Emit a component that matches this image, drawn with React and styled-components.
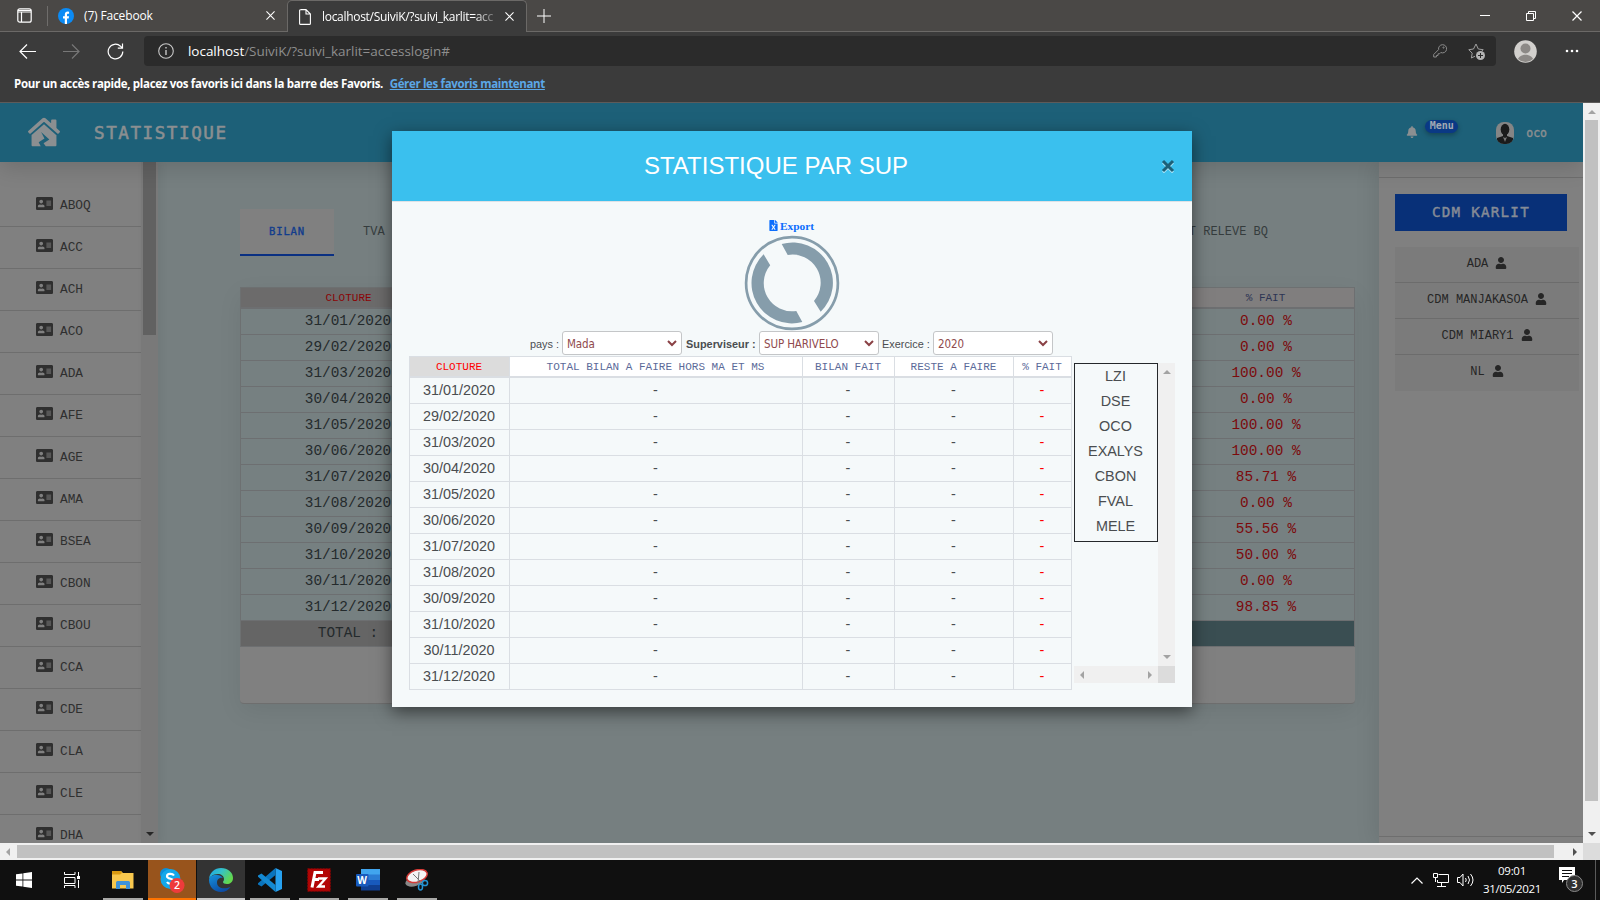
import React from "react";
import styled, { createGlobalStyle, css } from "styled-components";
import { FaHouseDamage, FaAddressCard, FaUser, FaBell, FaFileExcel } from "react-icons/fa";

const ui = `"Open Sans", "Noto Sans", sans-serif`;
const arial = `"Liberation Sans", Arial, sans-serif`;
const mono = `"Liberation Mono", monospace`;
const monoWide = `"DejaVu Sans Mono", monospace`;

const Global = createGlobalStyle`
  *, *::before, *::after { box-sizing: border-box; }
  body { margin: 0; background: #101010; overflow: hidden; }
  svg { display: block; flex: none; }
`;

const Desktop = styled.div`
  width: 1600px;
  height: 900px;
  display: flex;
  flex-direction: column;
  overflow: hidden;
  white-space: nowrap;
`;

/* ---------- browser chrome ---------- */
const TabStrip = styled.div`
  height: 32px;
  flex: none;
  display: flex;
  background: #4a4846;
  color: #fff;
  font: 12px ${ui};
`;
const StripPart = styled.div`
  display: flex;
  align-items: center;
  height: 32px;
  width: ${(p) => p.$w}px;
  flex: ${(p) => (p.$grow ? 1 : "none")};
  padding-left: ${(p) => p.$pl || 0}px;
  border-bottom: 1px solid #6b6967;
`;
const Divider = styled.i`
  width: 1px;
  height: 20px;
  margin: 0 10px 0 15px;
  background: #6f6d6b;
`;
const TabTitle = styled.span`
  width: ${(p) => p.$w}px;
  padding-left: ${(p) => (p.$fade ? 11 : 10)}px;
  letter-spacing: ${(p) => p.$ls}px;
  ${(p) => p.$fade && css`
    mask-image: linear-gradient(90deg, #000 84%, transparent 98%);
  `}
`;
const ActiveTab = styled.div`
  width: 240px;
  height: 32px;
  display: flex;
  align-items: center;
  padding-left: 11px;
  background: #3b3b3b;
  border: 1px solid #6b6967;
  border-bottom: 0;
  border-radius: 5px 5px 0 0;
`;
const WindowButtons = styled.div`
  display: flex;
  margin-left: auto;
  gap: 36px;
  padding-right: 18px;
`;
const Toolbar = styled.div`
  height: 37px;
  flex: none;
  display: flex;
  align-items: center;
  background: #3b3b3b;
  padding: 1px 0 0 19px;
`;
const ToolIcon = styled.span`
  margin-right: ${(p) => p.$mr}px;
`;
const AddressBar = styled.div`
  width: 1352px;
  height: 30px;
  display: flex;
  align-items: center;
  padding: 0 11px 0 14px;
  background: #2b2b2b;
  border-radius: 4px;
  font: 13.5px ${ui};
  color: #8e8e8e;
`;
const Url = styled.span`
  margin-left: 14px;
  flex: 1;
  letter-spacing: -0.04px;
  b { font-weight: 400; color: #fff; }
`;
const Profile = styled.span`
  margin: 0 28px 0 18px;
`;
const FavBar = styled.div`
  height: 34px;
  flex: none;
  padding: 6px 0 0 14px;
  background: #3b3b3b;
  border-bottom: 1px solid #5d5b5a;
  color: #fff;
  font: 700 11.5px/18px ${ui};
  letter-spacing: -0.315px;
  a { margin-left: 4px; color: #5ba7e6; text-decoration: underline; letter-spacing: -0.35px; }
`;

/* ---------- page ---------- */
const Viewport = styled.div`
  height: 757px;
  flex: none;
  display: grid;
  grid-template: 740px 17px / 1583px 17px;
  background: #f0f0f0;
`;
const Page = styled.div`
  position: relative;
  display: flex;
  flex-direction: column;
  overflow: hidden;
  background: #767f80;
  font-family: ${mono};
`;
const Header = styled.header`
  position: relative;
  z-index: 1;
  height: 59px;
  flex: none;
  display: flex;
  align-items: center;
  padding: 0 36px 0 27px;
  background: #1d6078;
  color: #8b8f91;
  box-shadow: 0 6px 22px rgba(0, 0, 0, 0.14);
`;
const HomeLink = styled.span`
  margin-bottom: 2px;
  padding-left: 1px;
`;
const PageTitle = styled.h1`
  margin: 0 auto 0 34px;
  font: 400 17.6px ${monoWide};
  letter-spacing: 1.55px;
  -webkit-text-stroke: 0.55px #8b8f91;
`;
const MenuBadge = styled.span`
  width: 33px;
  height: 13px;
  margin: -12px 38px 0 7px;
  border-radius: 7px;
  background: #0a3985;
  box-shadow: 0 2px 5px rgba(0, 0, 0, 0.3);
  color: #a3a9b4;
  text-align: center;
  font: 700 10px/12px ${monoWide};
`;
const BellSlot = styled.span`
  margin-bottom: 1px;
`;
const UserName = styled.span`
  margin-left: 12px;
  font: 400 11.5px ${monoWide};
  -webkit-text-stroke: 0.4px #8b8f91;
`;
const Columns = styled.div`
  flex: 1;
  min-height: 0;
  display: flex;
`;
const Sidebar = styled.nav`
  width: 141px;
  padding-top: 23px;
  background: #808080;
`;
const SideItem = styled.div`
  height: 42px;
  display: flex;
  align-items: center;
  gap: 7px;
  padding: 0 0 4px 36px;
  border-bottom: 1px solid #6e6e6e;
  color: #2f2f2f;
  font-size: 12.8px;
  span { padding-top: 3px; }
`;
const SideScroll = styled.div`
  width: 17px;
  display: flex;
  flex-direction: column;
  align-items: center;
  justify-content: space-between;
  padding-bottom: 7px;
  background: #797979;
  box-shadow: 3px 0 8px rgba(0, 0, 0, 0.06);
`;
const SideThumb = styled.div`
  width: 13px;
  height: 173px;
  background: #616161;
`;
const Main = styled.main`
  flex: 1;
  padding: 47px 24px 0 82px;
`;
const Tabs = styled.div`
  height: 47px;
  display: flex;
  align-items: center;
  justify-content: space-between;
  padding-right: 87px;
  color: #353c3d;
  font-size: 12px;
`;
const TabGroup = styled.div`
  display: flex;
  align-items: center;
  gap: 29px;
`;
const TabLink = styled.span`
  margin-bottom: 2px;
`;
const CurrentTab = styled.span`
  width: 94px;
  height: 47px;
  background: #808080;
  border-bottom: 2px solid #0a3082;
  color: #123c8c;
  font: 400 10.6px/44px ${monoWide};
  letter-spacing: 0.82px;
  -webkit-text-stroke: 0.35px #123c8c;
  text-align: center;
`;
const Card = styled.section`
  width: 1115px;
  margin-top: 31px;
  padding-bottom: 56px;
  background: #808080;
  border-bottom: 1px solid #6e6e6e;
  border-radius: 0 0 4px 4px;
  box-shadow: 0 8px 24px rgba(0, 0, 0, 0.07);
`;
const BackTable = styled.div`
  display: grid;
  grid-template-columns: 216px 1fr 177px;
  border: 1px solid #6d7071;
  border-width: 1px 0 0 1px;
`;
const BackCell = styled.div`
  height: 26px;
  background: #768081;
  border: 1px solid #6d6f71;
  border-width: 0 1px 1px 0;
  color: ${(p) => (p.$red ? "#7c0a0c" : "#242a2c")};
  text-align: center;
  font-size: 14.4px;
  line-height: 24px;
  padding-right: ${(p) => (p.$red ? 0 : 1)}px;
  ${(p) => p.$total && css`
    background: ${p.$total};
  `}
`;
const BackHead = styled(BackCell)`
  height: 21px;
  border-bottom-width: 2px;
  background: ${(p) => (p.$red ? "#6c6b6b" : "#807e7e")};
  color: ${(p) => (p.$red ? "#8a0506" : "#2d3554")};
  font-size: 11px;
  line-height: 20px;
`;
const RightPanel = styled.aside`
  width: 204px;
  display: flex;
  flex-direction: column;
  background: #808080;
  box-shadow: -4px 0 20px rgba(0, 0, 0, 0.09);
`;
const PanelEdge = styled.div`
  height: ${(p) => p.$h}px;
  ${(p) => (p.$end ? "border-top" : "border-bottom")}: 1px solid #6e6e6e;
`;
const CdmButton = styled.div`
  width: 172px;
  height: 37px;
  margin: 16px 0 16px 16px;
  background: #083078;
  color: #858b96;
  text-align: center;
  font: 400 14.2px/36px ${monoWide};
  letter-spacing: 1.25px;
  -webkit-text-stroke: 0.45px #858b96;
`;
const CdmList = styled.div`
  width: 184px;
  margin: 0 0 auto 16px;
`;
const CdmItem = styled.div`
  height: 36px;
  display: flex;
  align-items: center;
  justify-content: center;
  gap: 7px;
  padding-bottom: 2px;
  background: #7b7b7b;
  border-bottom: 1px solid ${(p) => (p.$last ? "#7b7b7b" : "#6c6c6c")};
  color: #262626;
  font-size: 12px;
  svg { margin-bottom: 1px; }
`;

/* ---------- scrollbars ---------- */
const VScroll = styled.div`
  padding: 17px 0 0 2px;
  position: relative;
  background: #f0f0f0;
`;
const HScroll = styled.div`
  padding: 2px 0 0 17px;
  position: relative;
  background: #f0f0f0;
`;
const Thumb = styled.div`
  width: ${(p) => p.$w}px;
  height: ${(p) => p.$h}px;
  background: #c1c1c1;
`;
const Corner = styled.div`
  background: #dcdcdc;
`;
const Arrow = styled.i`
  position: absolute;
  width: 0;
  height: 0;
  border: 4px solid transparent;
  ${(p) => ({
    up: `top: 7px; left: 5px; border-top: 0; border-bottom-color: ${p.$c};`,
    down: `bottom: 7px; left: 5px; border-bottom: 0; border-top-color: ${p.$c};`,
    left: `left: 6px; top: 5px; border-left: 0; border-right-color: ${p.$c};`,
    right: `right: 6px; top: 5px; border-right: 0; border-left-color: ${p.$c};`,
    flow: `position: static; border-bottom: 0; border-top-color: ${p.$c};`,
  })[p.$dir]}
`;

/* ---------- modal ---------- */
const Modal = styled.div`
  position: absolute;
  z-index: 2;
  left: 392px;
  top: 28px;
  width: 800px;
  height: 576px;
  background: #f5f9fa;
  box-shadow: 0 5px 16px rgba(0, 0, 0, 0.5);
  color: #4a4d50;
  font-family: ${arial};
`;
const ModalHeader = styled.div`
  height: 71px;
  display: flex;
  align-items: center;
  background: #3ac0ee;
  border-bottom: 1px solid #dee2e6;
  color: #fff;
`;
const ModalTitle = styled.h2`
  flex: 1;
  margin: 0 -33px 0 0;
  padding-right: 34px;
  text-align: center;
  font: 400 24px ${arial};
`;
const Close = styled.span`
  margin-right: 17px;
`;
const ModalBody = styled.div`
  padding: 15px 17px 0;
`;
const Export = styled.div`
  height: 18px;
  display: flex;
  align-items: center;
  justify-content: center;
  gap: 1px;
  padding: 0 2px 1px 0;
  color: #0d6efd;
  font: 700 11.4px "Liberation Serif", serif;
`;
const Loader = styled.div`
  display: flex;
  justify-content: center;
  height: 96px;
`;
const Filters = styled.div`
  height: 24px;
  margin-bottom: 1px;
  display: flex;
  align-items: center;
  padding-left: 121px;
`;
const Label = styled.span`
  width: ${(p) => p.$w}px;
  margin-left: ${(p) => p.$ml || 0}px;
  padding-top: 2px;
  font-size: 10.9px;
  font-weight: ${(p) => (p.$bold ? 700 : 400)};
`;
const Select = styled.div`
  width: 120px;
  height: 24px;
  display: flex;
  align-items: center;
  justify-content: space-between;
  padding: 2px 4px 0 4px;
  background: #fff;
  border: 1px solid #c4c6c8;
  border-radius: 3px;
  color: #8f4a4d;
  font: 11.5px "DejaVu Sans Condensed", "DejaVu Sans", sans-serif;
  font-stretch: condensed;
  letter-spacing: -0.12px;
  svg { margin-bottom: 1px; }
`;
const Results = styled.div`
  display: flex;
`;
const Table = styled.div`
  width: 663px;
  display: grid;
  grid-template-columns: 100px 293px 92px 119px 58px;
  border: 1px solid #dadee3;
  border-width: 1px 0 0 1px;
`;
const Cell = styled.div`
  height: 26px;
  padding-right: 1px;
  border: 1px solid #dadee3;
  border-width: 0 1px 1px 0;
  text-align: center;
  font-size: 14.4px;
  line-height: 25px;
  color: ${(p) => (p.$red ? "#f00" : "#4a4d50")};
`;
const HeadCell = styled(Cell)`
  height: 21px;
  padding-right: 1px;
  border-bottom-width: 2px;
  background: ${(p) => (p.$red ? "#dcdcdc" : "#fff")};
  color: ${(p) => (p.$red ? "#f00" : "#5b6a99")};
  font: 11px/20px ${mono};
`;
const Scroller = styled.div`
  width: 101px;
  height: 320px;
  margin: 7px 0 0 2px;
  display: grid;
  grid-template: 303px 17px / 84px 17px;
`;
const Names = styled.div`
  height: 179px;
  padding-right: 1px;
  border: 1px solid #25282b;
  text-align: center;
  font-size: 14.4px;
  line-height: 25px;
`;

/* ---------- taskbar ---------- */
const Taskbar = styled.div`
  height: 40px;
  flex: none;
  display: flex;
  background: #101010;
  color: #fff;
`;
const TaskItem = styled.div`
  width: ${(p) => p.$w}px;
  margin-right: ${(p) => p.$mr || 0}px;
  padding-top: 2px;
  display: flex;
  align-items: center;
  justify-content: center;
  background: ${(p) => p.$bg || "transparent"};
  border-bottom: 2px solid ${(p) => p.$line || "transparent"};
`;
const Tray = styled.div`
  margin-left: auto;
  display: flex;
  align-items: center;
`;
const Clock = styled.div`
  width: 60px;
  margin: 0 16px 0 8px;
  text-align: center;
  font: 11.5px/18px ${ui};
  letter-spacing: -0.3px;
`;
const ShowDesktop = styled.i`
  width: 5px;
  height: 40px;
  margin-left: 12px;
  border-left: 1px solid #5a5a5a;
`;

const X = ({ s = 9, c = "#fff", w = 1.2 }) => (
  <svg width={s} height={s} viewBox="0 0 10 10" stroke={c} strokeWidth={w} fill="none">
    <path d="M.5.5l9 9M9.5.5l-9 9" />
  </svg>
);

const dates = ["31/01/2020", "29/02/2020", "31/03/2020", "30/04/2020", "31/05/2020", "30/06/2020", "31/07/2020", "31/08/2020", "30/09/2020", "31/10/2020", "30/11/2020", "31/12/2020"];
const rates = ["0.00 %", "0.00 %", "100.00 %", "0.00 %", "100.00 %", "100.00 %", "85.71 %", "0.00 %", "55.56 %", "50.00 %", "0.00 %", "98.85 %"];
const clients = ["ABOQ", "ACC", "ACH", "ACO", "ADA", "AFE", "AGE", "AMA", "BSEA", "CBON", "CBOU", "CCA", "CDE", "CLA", "CLE", "DHA"];
const managers = ["ADA", "CDM MANJAKASOA", "CDM MIARY1", "NL"];
const names = ["LZI", "DSE", "OCO", "EXALYS", "CBON", "FVAL", "MELE"];
const heads = ["CLOTURE", "TOTAL BILAN A FAIRE HORS MA ET MS", "BILAN FAIT", "RESTE A FAIRE", "% FAIT"];

const Chevron = () => (
  <svg width="10" height="7" viewBox="0 0 10 7" fill="none" stroke="#8a4145" strokeWidth="2">
    <path d="M1 1l4 4 4-4" />
  </svg>
);

function Chrome() {
  return (
    <>
      <TabStrip>
        <StripPart $w={287} $pl={17}>
          <svg width="15" height="15" viewBox="0 0 15 15" fill="none" stroke="#fff" strokeWidth="1.2">
            <rect x=".8" y=".8" width="13.4" height="13.4" rx="2" />
            <path d="M1 2.5h13M1 4h13M4.5 4v10" />
          </svg>
          <Divider />
          <svg width="16" height="16" viewBox="0 0 16 16">
            <circle cx="8" cy="8" r="8" fill="#0b8bf5" />
            <path d="M6.8 16v-5.500H5V8.200h1.800V6.700C6.800 4.600 8 3.600 9.700 3.600l1.400.1v2H10c-.8 0-1 .5-1 1.100v1.400h2l-.3 2.300H9V16z" fill="#fff" />
          </svg>
          <TabTitle $w={192} $ls={-0.15}>(7) Facebook</TabTitle>
          <X />
        </StripPart>
        <ActiveTab>
          <svg width="12" height="16" viewBox="0 0 12 16" fill="none" stroke="#fff" strokeWidth="1.1">
            <path d="M1.5.6H7l4.400 4.400v9.400a1 1 0 0 1-1 1H1.600a1 1 0 0 1-1-1V1.600a1 1 0 0 1 1-1zM7 .8V5h4.200" />
          </svg>
          <TabTitle $w={194} $ls={-0.3} $fade>localhost/SuiviK/?suivi_karlit=acc</TabTitle>
          <X />
        </ActiveTab>
        <StripPart $grow $pl={10}>
          <svg width="14" height="14" viewBox="0 0 14 14" stroke="#fff"><path d="M7 0v14M0 7h14" /></svg>
          <WindowButtons>
            <svg width="10" height="10" stroke="#fff"><path d="M0 4.5h10" /></svg>
            <svg width="10" height="10" fill="none" stroke="#fff"><path d="M.5 2.5h7v7h-7zM2.5 2V.5h7v7H8" /></svg>
            <X s={10} />
          </WindowButtons>
        </StripPart>
      </TabStrip>
      <Toolbar>
        <ToolIcon $mr={27}>
          <svg width="17" height="15" viewBox="0 0 17 15" fill="none" stroke="#fff" strokeWidth="1.2"><path d="M17 7.5H1M8 .5l-7 7 7 7" /></svg>
        </ToolIcon>
        <ToolIcon $mr={27}>
          <svg width="17" height="15" viewBox="0 0 17 15" fill="none" stroke="#777" strokeWidth="1.2"><path d="M0 7.5h16M9 .5l7 7-7 7" /></svg>
        </ToolIcon>
        <ToolIcon $mr={20}>
          <svg width="17" height="17" viewBox="0 0 17 17" fill="none" stroke="#fff" strokeWidth="1.2"><path d="M15.8 8.500A7.300 7.300 0 1 1 13.500 3.200L15 4.700M15.500.5v4.700h-4.700" /></svg>
        </ToolIcon>
        <AddressBar>
          <svg width="16" height="16" viewBox="0 0 16 16" fill="none" stroke="#c8c8c8" strokeWidth="1.1">
            <circle cx="8" cy="8" r="7.3" /><path d="M8 7v5M8 4v1.6" strokeWidth="1.4" />
          </svg>
          <Url><b>localhost</b>/SuiviK/?suivi_karlit=accesslogin#</Url>
          <ToolIcon $mr={21}>
            <svg width="14" height="14" viewBox="0 0 14 14" fill="none" stroke="#8b8b8b">
              <path d="M9.3.7a4.100 4.100 0 1 1-1.500 7.800L6.500 9.800H5v1.700H3.400V13H.7v-2.500l4.900-4.900A4.100 4.100 0 0 1 9.300.7z" /><circle cx="10.5" cy="3.6" r=".6" />
            </svg>
          </ToolIcon>
          <svg width="17" height="17" viewBox="0 0 17 17" fill="none" stroke="#a0a0a0">
            <path d="M7 13.200L3.400 15l.8-4.800L.8 6.700l4.700-.7L8 1l2.300 5 4.900.7-1.600 1.600" />
            <circle cx="12.5" cy="12.5" r="4.5" fill="#b4b4b4" stroke="none" />
            <path d="M12.5 10v5M10 12.500h5" stroke="#2b2b2b" />
          </svg>
        </AddressBar>
        <Profile>
          <svg width="23" height="23" viewBox="0 0 23 23">
            <defs><clipPath id="pc"><circle cx="11.5" cy="11.5" r="10.5" /></clipPath></defs>
            <circle cx="11.5" cy="11.5" r="11.3" fill="#d2d0cd" />
            <circle cx="11.5" cy="8.5" r="5" fill="#8c8986" />
            <path d="M3 23c0-11 17-11 17 0z" fill="#8c8986" clipPath="url(#pc)" />
          </svg>
        </Profile>
        <svg width="14" height="4" fill="#fff"><circle cx="2" cy="2" r="1.3" /><circle cx="7" cy="2" r="1.3" /><circle cx="12" cy="2" r="1.3" /></svg>
      </Toolbar>
      <FavBar>
        Pour un accès rapide, placez vos favoris ici dans la barre des Favoris. <a>Gérer les favoris maintenant</a>
      </FavBar>
    </>
  );
}

function StatModal() {
  return (
    <Modal>
      <ModalHeader>
        <ModalTitle>STATISTIQUE PAR SUP</ModalTitle>
        <Close>
          <svg width="14" height="14" viewBox="0 0 14 14" fill="none">
            <path d="M2 3.500l10 10M12 3.500l-10 10" stroke="#a8e2f6" strokeWidth="2.6" />
            <path d="M2 2l10 10M12 2l-10 10" stroke="#1d6078" strokeWidth="3" />
          </svg>
        </Close>
      </ModalHeader>
      <ModalBody>
        <Export><FaFileExcel size={11} />Export</Export>
        <Loader>
          <svg width="96" height="96" viewBox="-48 -48 96 96" fill="#869dab">
            <circle r="45.9" fill="none" stroke="#869dab" strokeWidth="2.7" />
            <path d="M-10.3-39A40.300 40.300 0 0 1 28.700 28.700L22 18A28.200 28.200 0 0 0-4.300-28z" />
            <path d="M10.3 39A40.300 40.300 0 0 1-28.400-28.700L-21.800-17.800A28.200 28.200 0 0 0 4.300 28z" />
          </svg>
        </Loader>
        <Filters>
          <Label $w={32}>pays :</Label>
          <Select>Mada<Chevron /></Select>
          <Label $w={73} $ml={4} $bold>Superviseur :</Label>
          <Select>SUP HARIVELO<Chevron /></Select>
          <Label $w={51} $ml={3}>Exercice :</Label>
          <Select>2020<Chevron /></Select>
        </Filters>
        <Results>
          <Table>
            {heads.map((h, i) => <HeadCell key={h} $red={i === 0}>{h}</HeadCell>)}
            {dates.map((d) => (
              <React.Fragment key={d}>
                <Cell>{d}</Cell><Cell>-</Cell><Cell>-</Cell><Cell>-</Cell><Cell $red>-</Cell>
              </React.Fragment>
            ))}
          </Table>
          <Scroller>
            <Names>{names.map((n) => <div key={n}>{n}</div>)}</Names>
            <VScroll><Arrow $dir="up" $c="#a3a3a3" /><Arrow $dir="down" $c="#a3a3a3" /></VScroll>
            <HScroll><Arrow $dir="left" $c="#a3a3a3" /><Arrow $dir="right" $c="#a3a3a3" /></HScroll>
            <Corner />
          </Scroller>
        </Results>
      </ModalBody>
    </Modal>
  );
}

function SitePage() {
  return (
    <Page>
      <Header>
        <HomeLink><FaHouseDamage size={32} /></HomeLink>
        <PageTitle>STATISTIQUE</PageTitle>
        <BellSlot><FaBell size={12} /></BellSlot>
        <MenuBadge>Menu</MenuBadge>
        <svg width="18" height="22" viewBox="0 0 18 22">
          <defs><clipPath id="av"><rect width="18" height="22" rx="8" /></clipPath></defs>
          <g clipPath="url(#av)">
            <rect width="18" height="22" fill="#858585" />
            <ellipse cx="9" cy="7.5" rx="4.3" ry="5.8" fill="#1b1b1b" />
            <path d="M7 11h4v3l6 2v6H1v-6l6-2z" fill="#1b1b1b" />
            <path d="M7 15l2 5 2-5-2 1z" fill="#777" />
          </g>
        </svg>
        <UserName>oco</UserName>
      </Header>
      <Columns>
        <Sidebar>
          {clients.map((c) => <SideItem key={c}><FaAddressCard size={17} /><span>{c}</span></SideItem>)}
        </Sidebar>
        <SideScroll><SideThumb /><Arrow $dir="flow" $c="#262626" /></SideScroll>
        <Main>
          <Tabs>
            <TabGroup><CurrentTab>BILAN</CurrentTab><TabLink>TVA</TabLink></TabGroup>
            <TabLink>T RELEVE BQ</TabLink>
          </Tabs>
          <Card>
            <BackTable>
              <BackHead $red>CLOTURE</BackHead><BackHead /><BackHead>% FAIT</BackHead>
              {dates.map((d, i) => (
                <React.Fragment key={d}>
                  <BackCell>{d}</BackCell><BackCell /><BackCell $red>{rates[i]}</BackCell>
                </React.Fragment>
              ))}
              <BackCell $total="#656565">TOTAL :</BackCell><BackCell $total="#3a4e52" /><BackCell $total="#3a4e52" />
            </BackTable>
          </Card>
        </Main>
        <RightPanel>
          <PanelEdge $h={16} />
          <CdmButton>CDM KARLIT</CdmButton>
          <CdmList>
            {managers.map((m, i) => <CdmItem key={m} $last={i === 3}>{m}<FaUser size={12} /></CdmItem>)}
          </CdmList>
          <PanelEdge $h={7} $end />
        </RightPanel>
      </Columns>
      <StatModal />
    </Page>
  );
}

function SystemBar() {
  return (
    <Taskbar>
      <TaskItem $w={48}>
        <svg width="16" height="16" viewBox="0 0 16 16" fill="#fff"><path d="M0 2.300l6.500-.9v6.200H0zM7.300 1.300L16 0v7.600H7.300zM0 8.400h6.500v6.200L0 13.700zM7.300 8.400H16V16l-8.700-1.300z" /></svg>
      </TaskItem>
      <TaskItem $w={48} $mr={7}>
        <svg width="17" height="16" viewBox="0 0 17 16" fill="none" stroke="#fff"><path d="M.5 0v2.500h10.500V0M.5 5.500h10.500v6H.5zM.5 16v-2.500h10.500V16M14.500 0v4M14.500 8v8" /><rect x="13.5" y="4.5" width="2" height="2" fill="#fff" /></svg>
      </TaskItem>
      <TaskItem $w={40} $mr={5} $line="#a9a9a7">
        <svg width="22" height="18" viewBox="0 0 22 18"><path d="M0 0h9l2 2h10.500v15.500H0z" fill="#f8c84e" /><path d="M0 0h9l1 2-2 1.500H0z" fill="#d99a12" /><path d="M4 18v-6.500A1.500 1.500 0 0 1 5.500 10h11a1.500 1.500 0 0 1 1.500 1.500V18h-4v-4H8v4z" fill="#3f93d8" /></svg>
      </TaskItem>
      <TaskItem $w={48} $mr={1} $bg="#98541c" $line="#ff7300">
        <svg width="26" height="26" viewBox="0 0 26 26">
          <circle cx="7" cy="7" r="6" fill="#0d8fd8" /><circle cx="15" cy="17" r="6.5" fill="#0d8fd8" /><circle cx="11.5" cy="12" r="10" fill="#13a8ea" />
          <path d="M15 8.500C13.500 6.300 8 6.300 8 9.200c0 3.200 7 1.800 7 5.200 0 3-5.500 3-7 .6" fill="none" stroke="#fff" strokeWidth="2.2" />
          <circle cx="18" cy="18.5" r="7.5" fill="#ee3b3b" />
          <text x="18" y="22.3" fill="#fff" fontFamily="Open Sans" fontWeight="600" fontSize="10.5" textAnchor="middle">2</text>
        </svg>
      </TaskItem>
      <TaskItem $w={48} $mr={5} $bg="#333" $line="#c4c4c4">
        <svg width="24" height="24" viewBox="0 0 24 24">
          <defs>
            <linearGradient id="eg" x1="0" y1="0" x2="1" y2=".5"><stop offset="0" stopColor="#1ba4e8" /><stop offset=".5" stopColor="#35c1c8" /><stop offset="1" stopColor="#62d84e" /></linearGradient>
            <linearGradient id="eb" x1="0" y1="0" x2=".6" y2="1"><stop offset="0" stopColor="#1691dc" /><stop offset="1" stopColor="#0c4ba4" /></linearGradient>
          </defs>
          <path d="M0 12C0 4.500 6 0 12 0c7 0 12 4.500 12 10 0 4-3 6-6 6-2.500 0-4-1-4-2s1-1 1-3c0-3-3-5-6-5C4 6 0 9 0 12z" fill="url(#eg)" />
          <path d="M0 12c0-3.500 4-5.500 8-5 3 .2 5 1.500 6 3-4-1-6 2-6 4.500 0 5 6 7.500 13.500 4.500C19.500 22 16 24 12 24 5 24 0 18.500 0 12z" fill="url(#eb)" />
        </svg>
      </TaskItem>
      <TaskItem $w={40} $mr={9} $line="#a9a9a7">
        <svg width="24" height="24" viewBox="0 0 24 24"><path d="M17.500 0L24 3v18l-6.500 3z" fill="#27a1ef" /><path d="M17.500 0v7L3.500 18.500 0 16.500v-1.200z" fill="#0a74bd" /><path d="M17.500 24v-7L3.500 5.500 0 7.500v1.200z" fill="#1489d2" /></svg>
      </TaskItem>
      <TaskItem $w={40} $mr={9} $line="#a9a9a7">
        <svg width="24" height="24" viewBox="0 0 24 24"><rect x=".7" y=".7" width="22.6" height="22.6" fill="#b30505" stroke="#7d0505" strokeDasharray="2 1" /><path d="M5 19.500L8 4.500h8M6.500 11.500H12" fill="none" stroke="#fff" strokeWidth="3" /><path d="M11 10.500h7.500l-7 8H18" fill="none" stroke="#fff" strokeWidth="2.4" /></svg>
      </TaskItem>
      <TaskItem $w={40} $mr={9} $line="#a9a9a7">
        <svg width="24" height="22" viewBox="0 0 24 22"><rect x="5" width="19" height="6" fill="#41a5ee" /><rect x="5" y="5.5" width="19" height="5.5" fill="#2b7cd3" /><rect x="5" y="11" width="19" height="5.5" fill="#185abd" /><rect x="5" y="16" width="19" height="5.5" fill="#103f91" /><rect y="5" width="12.5" height="12.5" rx="1" fill="#185abd" /><text x="6.2" y="15" fill="#fff" fontFamily="Open Sans" fontWeight="700" fontSize="10" textAnchor="middle">W</text></svg>
      </TaskItem>
      <TaskItem $w={40} $line="#a9a9a7">
        <svg width="24" height="22" viewBox="0 0 24 22" fill="none"><ellipse cx="10" cy="12" rx="10" ry="5" fill="#888" transform="rotate(-18 10 12)" /><ellipse cx="12" cy="7" rx="10.5" ry="6" fill="#f4f4f4" stroke="#d43a36" strokeWidth="1.5" transform="rotate(-18 12 7)" /><path d="M8 5l8 8M14 3l-1 11" stroke="#777" /><circle cx="20" cy="14" r="2.6" stroke="#2492d2" strokeWidth="1.5" /><ellipse cx="15.5" cy="18" rx="2" ry="3" stroke="#2492d2" strokeWidth="1.5" /></svg>
      </TaskItem>
      <Tray>
        <ToolIcon $mr={10}><svg width="12" height="7" viewBox="0 0 12 7" fill="none" stroke="#fff" strokeWidth="1.2"><path d="M.5 6.500L6 1l5.500 5.500" /></svg></ToolIcon>
        <ToolIcon $mr={8}><svg width="16" height="14" viewBox="0 0 16 14" fill="none" stroke="#fff"><path d="M5.500 1.500h10v8h-11V7M8.500 10v3M4 13.500h9M.5.5h4v4h-4zM2.500 5v4" /></svg></ToolIcon>
        <svg width="17" height="14" viewBox="0 0 17 14" fill="none" stroke="#fff"><path d="M.5 4.500H3l3-3.500v12L3 9.500H.5zM8.500 5q1.500 2 0 4M11 3q3 4 0 8M13.500 1q5 6 0 12" /></svg>
        <Clock>09:01<br />31/05/2021</Clock>
        <svg width="25" height="26" viewBox="0 0 25 26">
          <path d="M1 0h16v13H6l-2 3v-3H1z" fill="#fff" /><path d="M4 3.500h10M4 6.500h10M4 9.500h7" stroke="#101010" />
          <circle cx="16.5" cy="16.5" r="8" fill="#303030" stroke="#8b8b8b" />
          <text x="16.5" y="20.5" fill="#fff" fontFamily="Open Sans" fontSize="11" fontWeight="600" textAnchor="middle">3</text>
        </svg>
        <ShowDesktop />
      </Tray>
    </Taskbar>
  );
}

export default function App() {
  return (
    <Desktop>
      <Global />
      <Chrome />
      <Viewport>
        <SitePage />
        <VScroll><Arrow $dir="up" $c="#a3a3a3" /><Thumb $w={13} $h={681} /><Arrow $dir="down" $c="#505050" /></VScroll>
        <HScroll><Arrow $dir="left" $c="#a3a3a3" /><Thumb $w={1537} $h={13} /><Arrow $dir="right" $c="#505050" /></HScroll>
        <Corner />
      </Viewport>
      <SystemBar />
    </Desktop>
  );
}
